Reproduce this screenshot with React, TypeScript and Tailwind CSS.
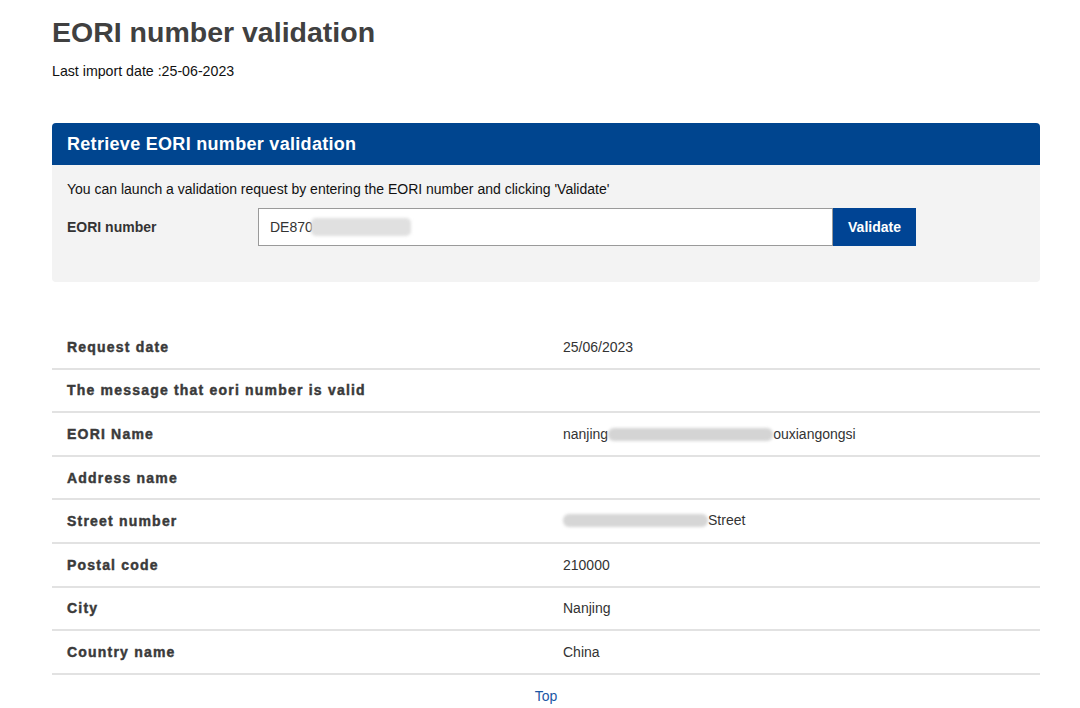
import React from "react";

const rows: { label: string; value: React.ReactNode }[] = [
  { label: "Request date", value: "25/06/2023" },
  { label: "The message that eori number is valid", value: "" },
  {
    label: "EORI Name",
    value: (
      <span className="inline-flex items-center">
        nanjing
        <span className="inline-block h-[13px] w-[165px] rounded-[6px] bg-[#d4d4d4] blur-[1.5px]" />
        ouxiangongsi
      </span>
    ),
  },
  { label: "Address name", value: "" },
  {
    label: "Street number",
    value: (
      <span className="inline-flex items-center">
        <span className="inline-block h-[13px] w-[145px] rounded-[6px] bg-[#d6d6d6] blur-[1.5px]" />
        Street
      </span>
    ),
  },
  { label: "Postal code", value: "210000" },
  { label: "City", value: "Nanjing" },
  { label: "Country name", value: "China" },
];

export default function App() {
  return (
    <div
      className="min-h-[708px] w-[1080px] bg-white text-[14px] text-[#333]"
      style={{ fontFamily: '"Liberation Sans", Arial, sans-serif' }}
    >
      <div className="ml-[52px] w-[988px] pt-[15px]">
        <h1 className="text-[28.5px] font-bold leading-[34px] text-[#404040]">
          EORI number validation
        </h1>
        <p className="mt-[12px] text-[14.2px] leading-[20px] text-[#111]">Last import date :25-06-2023</p>

        <div className="mt-[42px] overflow-hidden rounded-[4px]">
          <div className="flex h-[42px] items-center bg-[#00458f] px-[15px] text-[18px] font-bold tracking-[0.3px] text-white">
            Retrieve EORI number validation
          </div>
          <div className="h-[117px] bg-[#f3f3f3] px-[15px] pt-[15px]">
            <p className="leading-[18px] text-[#111]">
              You can launch a validation request by entering the EORI number and clicking 'Validate'
            </p>
            <div className="mt-[10px] flex items-center">
              <label className="w-[191px] font-bold text-[#333]">EORI number</label>
              <div className="flex h-[38px] w-[575px] items-center border border-[#9a9a9a] bg-white px-[11px] text-[#333]">
                DE870
                <span className="ml-[-2px] inline-block h-[18px] w-[100px] rounded-[5px] bg-[#e0e0e0] blur-[1.5px]" />
              </div>
              <button className="h-[38px] w-[83px] bg-[#004494] font-bold text-white">Validate</button>
            </div>
          </div>
        </div>

        <div className="mt-[44px]">
          {rows.map((r) => (
            <div
              key={r.label}
              className="grid h-[43.6px] grid-cols-[511px_1fr] items-center border-b-[2px] border-[#e2e2e2]"
            >
              <div className="pl-[15px] pt-[1px] font-bold tracking-[1.2px] text-[#3a3a3a] [-webkit-text-stroke:0.45px_#3a3a3a]">
                {r.label}
              </div>
              <div className="pt-[1px] text-[#333]">{r.value}</div>
            </div>
          ))}
        </div>

        <div className="mt-[11px] text-center">
          <a href="#" className="text-[#1c57a5]">
            Top
          </a>
        </div>
      </div>
    </div>
  );
}
